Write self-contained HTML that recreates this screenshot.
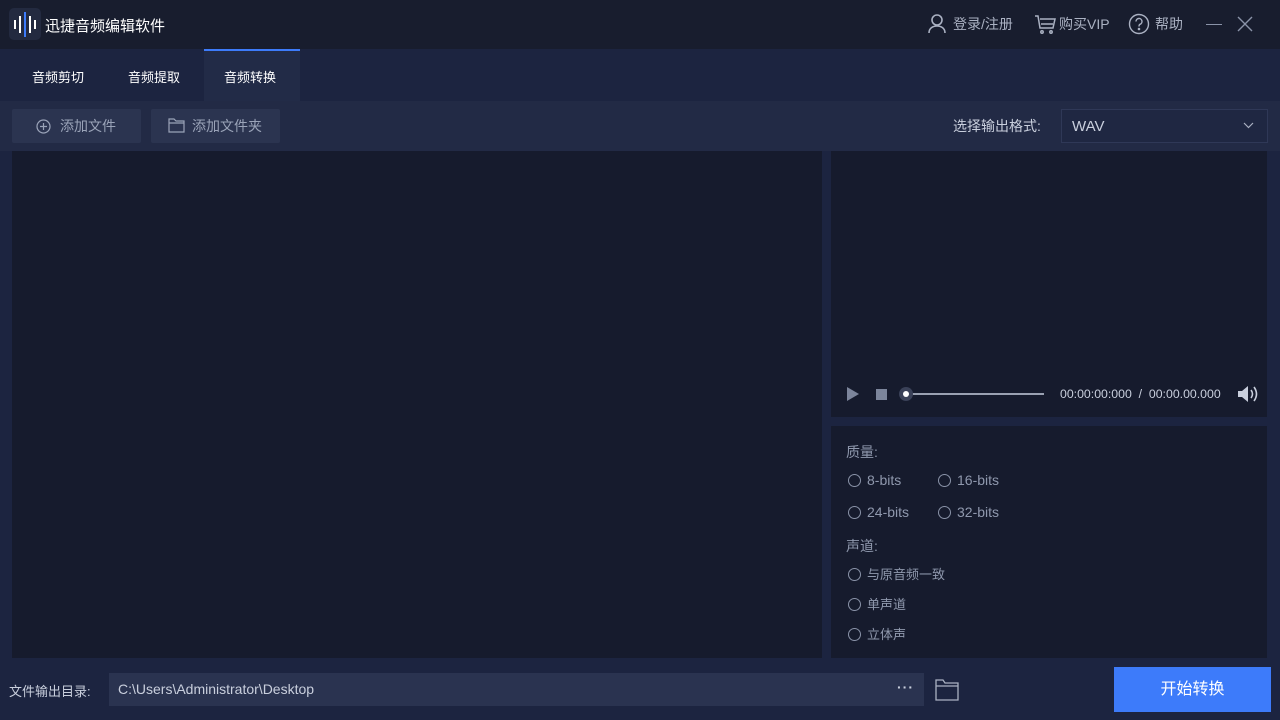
<!DOCTYPE html><html><head><meta charset="utf-8"><style>
*{margin:0;padding:0;box-sizing:border-box}
body{width:1280px;height:720px;background:#1c2440;font-family:"Liberation Sans","Noto Sans CJK SC",sans-serif;color:#c9cfdd;position:relative;overflow:hidden;font-size:14px}
.a{position:absolute}
.top{left:0;top:0;width:1280px;height:49px;background:#181d2e}
.panel{background:#161b2d}
.btn{background:#2b3450;color:#9aa3b8;height:34px;top:109px;border-radius:2px;line-height:34px;font-size:14px}
.r{display:inline-block;width:13px;height:13px;border:1px solid #8a93a8;border-radius:50%;vertical-align:-2px;margin-right:6px}
.opt{color:#8f98ad;font-size:14px}
</style></head><body>
<div class="a top"></div>
<div class="a" style="left:9px;top:8px;width:32px;height:32px;background:#232a40;border-radius:5px"></div>
<div class="a" style="left:14px;top:20px;width:2px;height:9px;background:#fff"></div>
<div class="a" style="left:19px;top:16px;width:2px;height:17px;background:#fff"></div>
<div class="a" style="left:24px;top:12px;width:2px;height:25px;background:#3d7bfa"></div>
<div class="a" style="left:29px;top:16px;width:2px;height:17px;background:#fff"></div>
<div class="a" style="left:34px;top:20px;width:2px;height:9px;background:#fff"></div>
<div class="a" style="left:45px;top:15px;font-size:15px;color:#fff">迅捷音频编辑软件</div>
<svg class="a" style="left:927px;top:13px" width="20" height="20" fill="none" stroke="#aab1c2" stroke-width="1.6"><circle cx="10" cy="7" r="5"/><path d="M2 20c0-5 4-7 8-7s8 2 8 7"/></svg>
<div class="a" style="left:953px;top:14px;color:#aab1c2">登录/注册</div>
<svg class="a" style="left:1034px;top:14px" width="22" height="20" fill="none" stroke="#aab1c2" stroke-width="1.5"><path d="M1 2h3l2 12h13l2-9H6"/><path d="M7 10h12"/><circle cx="8" cy="18" r="1.2"/><circle cx="17" cy="18" r="1.2"/></svg>
<div class="a" style="left:1059px;top:14px;color:#aab1c2">购买VIP</div>
<svg class="a" style="left:1128px;top:13px" width="22" height="22" fill="none" stroke="#aab1c2" stroke-width="1.4"><circle cx="11" cy="11" r="9.5"/><path d="M8 8.5a3 3 0 1 1 4 2.8c-1 .4-1 1-1 2.2"/><circle cx="11" cy="16" r=".6" fill="#aab1c2"/></svg>
<div class="a" style="left:1155px;top:14px;color:#aab1c2">帮助</div>
<div class="a" style="left:1206px;top:24px;width:16px;height:1px;background:#8a93a8"></div>
<svg class="a" style="left:1237px;top:16px" width="16" height="16" stroke="#8a93a8" stroke-width="1.4"><path d="M1 1l14 14M15 1L1 15"/></svg>
<div class="a" style="left:204px;top:49px;width:96px;height:52px;background:#222b47;border-top:2px solid #3d7bfa"></div>
<div class="a" style="left:32px;top:67px;color:#fff;font-size:13px">音频剪切</div>
<div class="a" style="left:128px;top:67px;color:#fff;font-size:13px">音频提取</div>
<div class="a" style="left:224px;top:67px;color:#fff;font-size:13px">音频转换</div>
<div class="a" style="left:0;top:101px;width:1280px;height:50px;background:#222a45"></div>
<div class="a btn" style="left:12px;width:129px;padding-left:48px">添加文件</div>
<svg class="a" style="left:36px;top:119px" width="15" height="15" fill="none" stroke="#9aa3b8" stroke-width="1.2"><circle cx="7.5" cy="7.5" r="6.5"/><path d="M7.5 4v7M4 7.5h7"/></svg>
<div class="a btn" style="left:151px;width:129px;padding-left:41px">添加文件夹</div>
<svg class="a" style="left:168px;top:118px" width="17" height="15" fill="none" stroke="#9aa3b8" stroke-width="1.2"><path d="M1 1h5l2 2h8v11H1z M1 5h15"/></svg>
<div class="a" style="left:953px;top:116px;color:#c9cfdd">选择输出格式:</div>
<div class="a" style="left:1061px;top:109px;width:207px;height:34px;background:#1f2742;border:1px solid #2f3857;color:#c9cfdd;line-height:34px;padding-left:10px;font-size:15px">WAV</div>
<svg class="a" style="left:1243px;top:122px" width="11" height="7" fill="none" stroke="#aab1c2" stroke-width="1.2"><path d="M1 1l4.5 4.5L10 1"/></svg>
<div class="a panel" style="left:12px;top:151px;width:810px;height:507px"></div>
<div class="a panel" style="left:831px;top:151px;width:436px;height:266px"></div>
<div class="a panel" style="left:831px;top:426px;width:436px;height:232px"></div>
<svg class="a" style="left:846px;top:386px" width="14" height="16"><path d="M1 1l12 7-12 7z" fill="#7c859b"/></svg>
<div class="a" style="left:876px;top:389px;width:11px;height:11px;background:#7c859b"></div>
<div class="a" style="left:905px;top:393px;width:139px;height:2px;background:#9aa1b2"></div>
<div class="a" style="left:899px;top:387px;width:14px;height:14px;border-radius:50%;background:#3a4158"></div>
<div class="a" style="left:903px;top:391px;width:6px;height:6px;border-radius:50%;background:#fff"></div>
<div class="a" style="left:1060px;top:387px;font-size:12.3px;color:#c9cfdd">00:00:00:000 &nbsp;/ &nbsp;00:00.00.000</div>
<svg class="a" style="left:1237px;top:384px" width="22" height="20"><path d="M1 7h4l6-5v16l-6-5H1z" fill="#c9cfdd"/><path d="M14 6q3 4 0 8M17 3q5 7 0 14" stroke="#c9cfdd" stroke-width="1.6" fill="none"/></svg>
<div class="a opt" style="left:846px;top:442px">质量:</div>
<div class="a opt" style="left:848px;top:472px"><span class="r"></span>8-bits</div>
<div class="a opt" style="left:938px;top:472px"><span class="r"></span>16-bits</div>
<div class="a opt" style="left:848px;top:504px"><span class="r"></span>24-bits</div>
<div class="a opt" style="left:938px;top:504px"><span class="r"></span>32-bits</div>
<div class="a opt" style="left:846px;top:536px">声道:</div>
<div class="a opt" style="left:848px;top:564px;font-size:13px"><span class="r"></span>与原音频一致</div>
<div class="a opt" style="left:848px;top:594px;font-size:13px"><span class="r"></span>单声道</div>
<div class="a opt" style="left:848px;top:624px;font-size:13px"><span class="r"></span>立体声</div>
<div class="a" style="left:9px;top:681px;font-size:13px;color:#c9cfdd">文件输出目录:</div>
<div class="a" style="left:109px;top:673px;width:815px;height:33px;background:#2a3350;color:#c9cfdd;line-height:33px;padding-left:9px;font-size:14px">C:\Users\Administrator\Desktop</div>
<div class="a" style="left:897px;top:679px;color:#c9cfdd;font-weight:bold;letter-spacing:1px">···</div>
<svg class="a" style="left:935px;top:679px" width="24" height="22" fill="none" stroke="#aab1c2" stroke-width="1.3"><path d="M1 1h7l2 3h13v17H1z M1 7h22"/></svg>
<div class="a" style="left:1114px;top:667px;width:157px;height:45px;background:#3d7bfa;color:#fff;font-size:16px;text-align:center;line-height:45px">开始转换</div>
</body></html>
